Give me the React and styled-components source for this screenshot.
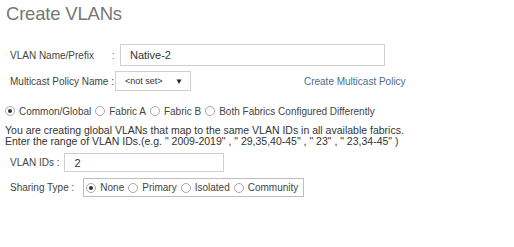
import React, { useState } from "react";
import styled, { createGlobalStyle } from "styled-components";

const GlobalStyle = createGlobalStyle`
  body {
    margin: 0;
    background: #fff;
    font-family: "Liberation Sans", Arial, sans-serif;
    color: #333;
  }
`;

const App = () => {
  const [scope, setScope] = useState("common");
  const [sharing, setSharing] = useState("none");
  const [name, setName] = useState("Native-2");
  const [ids, setIds] = useState("2");

  const scopes = [
    { id: "common", label: "Common/Global" },
    { id: "a", label: "Fabric A" },
    { id: "b", label: "Fabric B" },
    { id: "both", label: "Both Fabrics Configured Differently" }
  ];

  const sharingTypes = [
    { id: "none", label: "None" },
    { id: "primary", label: "Primary" },
    { id: "isolated", label: "Isolated" },
    { id: "community", label: "Community" }
  ];

  return (
    <Wrapper>
      <GlobalStyle />
      <Title>Create VLANs</Title>

      <Form>
        <Row top={19}>
          <Label width={97}>VLAN Name/Prefix</Label>
          <Colon>:</Colon>
          <TextInput
            width={265}
            height={22}
            left={5}
            value={name}
            onChange={e => setName(e.target.value)}
          />
        </Row>

        <Row top={5}>
          <Label gap={1}>Multicast Policy Name :</Label>
          <Select>
            <span>&lt;not set&gt;</span>
            <Arrow>▼</Arrow>
          </Select>
          <Link>Create Multicast Policy</Link>
        </Row>

        <RadioRow top={13}>
          {scopes.map(s => (
            <RadioOption key={s.id} gap={4} onClick={() => setScope(s.id)}>
              <Radio checked={scope === s.id} />
              {s.label}
            </RadioOption>
          ))}
        </RadioRow>

        <Info>
          You are creating global VLANs that map to the same VLAN IDs in all
          available fabrics.
          <br />
          Enter the range of VLAN IDs.(e.g. " 2009-2019" , " 29,35,40-45" , "
          23" , " 23,34-45" )
        </Info>

        <Row top={6}>
          <Label>VLAN IDs :</Label>
          <TextInput
            width={160}
            height={19}
            left={0}
            value={ids}
            onChange={e => setIds(e.target.value)}
          />
        </Row>

        <Row top={6}>
          <Label gap={9}>Sharing Type :</Label>
          <SharingBox>
            {sharingTypes.map(s => (
              <RadioOption key={s.id} gap={4} onClick={() => setSharing(s.id)}>
                <Radio checked={sharing === s.id} />
                {s.label}
              </RadioOption>
            ))}
          </SharingBox>
        </Row>
      </Form>
    </Wrapper>
  );
};

export default App;

const Wrapper = styled.div`
  width: 514px;
  height: 247px;
  background: #fff;
  overflow: hidden;
`;

const Title = styled.h1`
  margin: 3px 0 0 6px;
  font-size: 18.5px;
  line-height: 22px;
  font-weight: normal;
  color: #777;
  letter-spacing: -0.2px;
`;

const Form = styled.div`
  display: flex;
  flex-direction: column;
  padding-left: 10px;
  font-size: 10px;
`;

const Row = styled.div`
  display: flex;
  align-items: center;
  margin-top: ${p => p.top}px;
`;

const Label = styled.span`
  width: ${p => (p.width ? `${p.width}px` : "auto")};
  color: #444;
  margin-right: ${p => (p.gap !== undefined ? p.gap : 5)}px;
  white-space: nowrap;
`;

const Colon = styled.span`
  width: 3px;
  color: #777;
`;

const TextInput = styled.input`
  box-sizing: border-box;
  width: ${p => p.width}px;
  height: ${p => p.height}px;
  margin-left: ${p => p.left}px;
  border: 1px solid #cfcfcf;
  padding: 0 0 0 9px;
  font-family: "Liberation Sans", Arial, sans-serif;
  font-size: 11px;
  color: #333;
  outline: none;
`;

const Select = styled.div`
  box-sizing: border-box;
  display: flex;
  align-items: center;
  justify-content: space-between;
  width: 76px;
  height: 20px;
  padding: 0 7px 0 9px;
  border: 1px solid #cfcfcf;
  font-size: 9px;
  color: #333;
`;

const Arrow = styled.span`
  font-size: 8px;
  color: #222;
`;

const Link = styled.span`
  margin-left: 113px;
  color: #4d6d8c;
  font-size: 10px;
  cursor: pointer;
`;

const RadioRow = styled.div`
  display: flex;
  align-items: center;
  gap: 4px;
  height: 14px;
  margin-top: ${p => p.top}px;
  margin-left: -5px;
  color: #444;
`;

const RadioOption = styled.label`
  display: flex;
  align-items: center;
  gap: ${p => p.gap}px;
  cursor: pointer;
  white-space: nowrap;
`;

const Radio = styled.span`
  box-sizing: border-box;
  width: 10px;
  height: 10px;
  border-radius: 50%;
  border: 1px solid #a8a8a8;
  background: #fff;
  display: flex;
  align-items: center;
  justify-content: center;

  &::after {
    content: "";
    width: 4px;
    height: 4px;
    border-radius: 50%;
    background: ${p => (p.checked ? "#333" : "transparent")};
  }
`;

const Info = styled.div`
  margin: 7px 0 0 -5px;
  font-size: 10.5px;
  line-height: 11px;
  color: #333;
  white-space: nowrap;
`;

const SharingBox = styled.div`
  box-sizing: border-box;
  display: flex;
  align-items: center;
  gap: 4px;
  height: 19px;
  width: 221px;
  padding-left: 2px;
  border: 1px solid #bdbdbd;
  color: #444;
`;
